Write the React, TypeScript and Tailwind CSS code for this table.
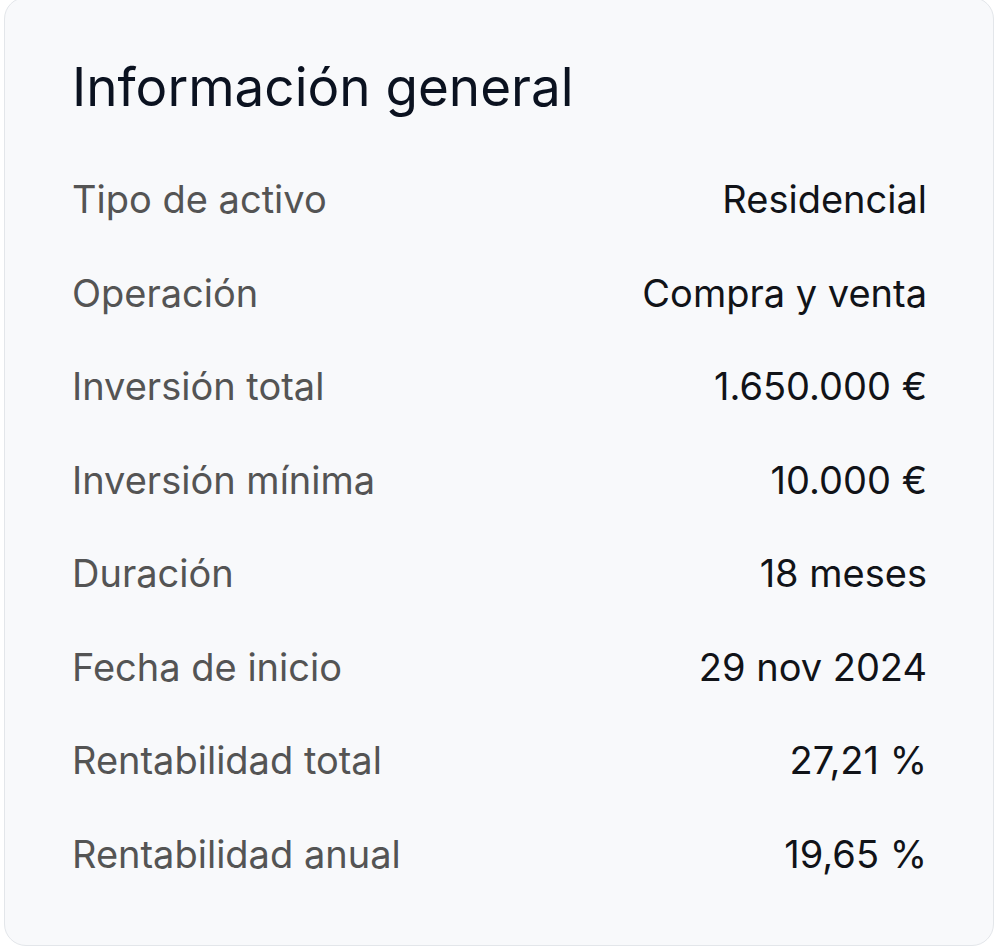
import React from "react";

const rows: [string, string][] = [
  ["Tipo de activo", "Residencial"],
  ["Operación", "Compra y venta"],
  ["Inversión total", "1.650.000 €"],
  ["Inversión mínima", "10.000 €"],
  ["Duración", "18 meses"],
  ["Fecha de inicio", "29 nov 2024"],
  ["Rentabilidad total", "27,21 %"],
  ["Rentabilidad anual", "19,65 %"],
];

export default function App() {
  return (
    <div className="w-[1000px] h-[948px] bg-white overflow-hidden px-[4px] pr-[6px]" style={{ fontFamily: "Inter, 'Noto Sans', sans-serif" }}>
      <div className="mt-[-3px] h-[949px] rounded-[22px] border border-[#e3e6ea] bg-[#f8f9fb] pl-[67px] pr-[66px] pt-[59px]">
        <h2 className="text-[53px] leading-[60px] font-normal text-[#0b1220]">Información general</h2>
        <div className="mt-[36px] flex flex-col">
          {rows.map(([k, v]) => (
            <div key={k} className="flex justify-between items-baseline text-[38px] leading-[93.5px]">
              <span className="text-[#545454]">{k}</span>
              <span className="text-[#111318]">{v}</span>
            </div>
          ))}
        </div>
      </div>
    </div>
  );
}
